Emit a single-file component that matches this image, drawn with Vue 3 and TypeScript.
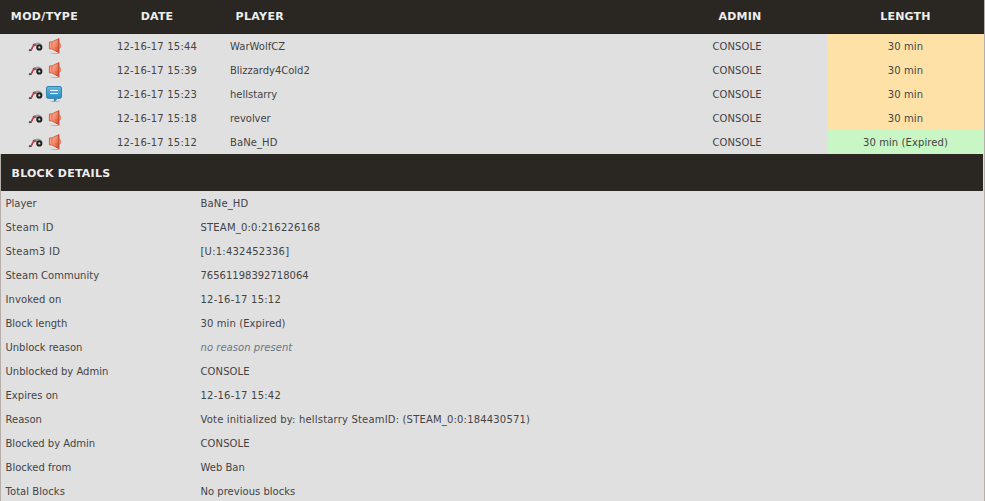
<script setup lang="ts">
interface Block {
  type: 'voice' | 'chat'
  date: string
  player: string
  admin: string
  length: string
  expired?: boolean
  nameTracking: number
}

interface Detail {
  label: string
  value: string
  labelTracking: number
  valueTracking: number
  empty?: boolean
}

const blocks: Block[] = [
  { type: 'voice', date: '12-16-17 15:44', player: 'WarWolfCZ', admin: 'CONSOLE', length: '30 min', nameTracking: 0 },
  { type: 'voice', date: '12-16-17 15:39', player: 'Blizzardy4Cold2', admin: 'CONSOLE', length: '30 min', nameTracking: -0.03 },
  { type: 'chat', date: '12-16-17 15:23', player: 'hellstarry', admin: 'CONSOLE', length: '30 min', nameTracking: 0 },
  { type: 'voice', date: '12-16-17 15:18', player: 'revolver', admin: 'CONSOLE', length: '30 min', nameTracking: -0.05 },
  { type: 'voice', date: '12-16-17 15:12', player: 'BaNe_HD', admin: 'CONSOLE', length: '30 min (Expired)', expired: true, nameTracking: 0.1 },
]

const details: Detail[] = [
  { label: 'Player', value: 'BaNe_HD', labelTracking: 0, valueTracking: 0.15 },
  { label: 'Steam ID', value: 'STEAM_0:0:216226168', labelTracking: 0.25, valueTracking: 0.2 },
  { label: 'Steam3 ID', value: '[U:1:432452336]', labelTracking: 0.25, valueTracking: 0.22 },
  { label: 'Steam Community', value: '76561198392718064', labelTracking: 0.02, valueTracking: 0 },
  { label: 'Invoked on', value: '12-16-17 15:12', labelTracking: 0.1, valueTracking: 0.22 },
  { label: 'Block length', value: '30 min (Expired)', labelTracking: -0.03, valueTracking: 0.1 },
  { label: 'Unblock reason', value: 'no reason present', labelTracking: -0.02, valueTracking: 0.04, empty: true },
  { label: 'Unblocked by Admin', value: 'CONSOLE', labelTracking: 0, valueTracking: 0.1 },
  { label: 'Expires on', value: '12-16-17 15:42', labelTracking: 0.05, valueTracking: 0.22 },
  { label: 'Reason', value: 'Vote initialized by: hellstarry SteamID: (STEAM_0:0:184430571)', labelTracking: 0, valueTracking: 0.18 },
  { label: 'Blocked by Admin', value: 'CONSOLE', labelTracking: 0, valueTracking: 0.1 },
  { label: 'Blocked from', value: 'Web Ban', labelTracking: 0.02, valueTracking: 0 },
  { label: 'Total Blocks', value: 'No previous blocks', labelTracking: 0.05, valueTracking: 0.02 },
]
</script>

<template>
  <main class="panel">
    <svg class="defs" width="0" height="0" aria-hidden="true">
      <defs>
        <linearGradient id="red" x1="0" y1="0" x2="1" y2="0.7">
          <stop offset="0" stop-color="#f3a088" />
          <stop offset="0.5" stop-color="#f39a7c" />
          <stop offset="1" stop-color="#e4502e" />
        </linearGradient>
        <linearGradient id="blue" x1="0" y1="0" x2="0" y2="1">
          <stop offset="0" stop-color="#65b8e0" />
          <stop offset="1" stop-color="#1c82bd" />
        </linearGradient>
      </defs>
    </svg>
    <div class="row head">
      <span class="type">MOD/TYPE</span>
      <span class="date">DATE</span>
      <span class="player">PLAYER</span>
      <span class="admin">ADMIN</span>
      <span class="length">LENGTH</span>
    </div>
    <div v-for="b in blocks" :key="b.date" class="row">
      <span class="type">
        <svg class="icon" viewBox="0 0 16 16">
          <path d="M2 11.8h2.2L6.4 7.6l3.2-.8" fill="none" stroke="#c23f4a" stroke-width="1.7" />
          <path d="M1.8 12.6h2.4M6 6.4l3.5-.6" stroke="#4c3d40" stroke-width="1" fill="none" />
          <path d="M8.4 5.9l3-.6 3 1.6" stroke="#9a9a9a" stroke-width="1.6" fill="none" />
          <circle cx="12.3" cy="9.4" r="2.1" fill="#d5d5d5" stroke="#222" stroke-width="2" />
        </svg>
        <svg v-if="b.type === 'voice'" class="icon" viewBox="0 0 16 16">
          <ellipse cx="8.5" cy="15.4" rx="5" ry=".5" fill="#a9a09d" opacity=".7" />
          <path d="M12 5.2c2.4.3 2.4 4.9 0 5.2" fill="#f3a283" stroke="#dc704f" stroke-width=".9" />
          <path d="M2.4 3.9h2.7L11.9.5v14.4l-6.8-4H2.4z" fill="url(#red)" stroke="#d55b3d" stroke-width=".9" />
          <path d="M5 4.3v6.4" stroke="#d96042" stroke-width=".7" />
          <path d="M11.7 1.2v13.2" stroke="#b9492f" stroke-width=".9" />
        </svg>
        <svg v-else class="icon chat" viewBox="0 0 16 16">
          <ellipse cx="9" cy="15.4" rx="5" ry=".5" fill="#999" opacity=".7" />
          <path d="M2 .5h12q1.5 0 1.5 1.5v8.6q0 1.7-1.5 1.7h-2.6l-3 3v-3H2q-1.5 0-1.5-1.7V2Q.5.5 2 .5z" fill="url(#blue)" stroke="#287ca9" stroke-width=".9" />
          <path d="M4 4.5h8M4 7.5h8" stroke="#eefaff" stroke-width="1.1" />
        </svg>
      </span>
      <span class="date">{{ b.date }}</span>
      <span class="player" :style="{ letterSpacing: b.nameTracking + 'px' }">{{ b.player }}</span>
      <span class="admin">{{ b.admin }}</span>
      <span class="length" :class="{ expired: b.expired }">{{ b.length }}</span>
    </div>
    <section class="details">
      <h2>BLOCK DETAILS</h2>
      <dl>
        <div v-for="d in details" :key="d.label" class="detail">
          <dt><span :style="{ letterSpacing: d.labelTracking + 'px' }">{{ d.label }}</span></dt>
          <dd :class="{ empty: d.empty }"><span :style="{ letterSpacing: d.valueTracking + 'px' }">{{ d.value }}</span></dd>
        </div>
      </dl>
    </section>
  </main>
</template>

<style>
body { overflow: hidden; background: #e0e0e0; }
</style>

<style scoped>
.panel {
  box-sizing: border-box;
  width: 985px;
  height: 501px;
  overflow: hidden;
  border-right: 1px solid #b5aeab;
  background: #e0e0e0;
  color: #444;
  font: 10px/26px Verdana, "DejaVu Sans", sans-serif;
}
.defs { display: block; height: 0; }
.row {
  display: grid;
  grid-template-columns: 89px 136px 422px 180px 157px;
  height: 24px;
}
.row > span { height: 24px; }
.type { display: flex; justify-content: center; align-items: center; gap: 4px; }
.icon { width: 16px; height: 16px; }
.chat { margin: 0 1px 0 -1px; }
.date { text-align: center; letter-spacing: 0.2px; }
.player { padding-left: 5px; }
.admin { text-align: center; letter-spacing: 0.1px; }
.length { text-align: center; background: #fde1a7; letter-spacing: 0.1px; }
.length.expired { background: #c8f7c5; }
.head {
  height: 34px;
  line-height: 33px;
  background: #2a2723;
  box-shadow: inset 0 -1px #2b1d20;
  color: #eee;
  font-size: 11px;
  font-weight: bold;
}
.head > span { height: 33px; background: none; letter-spacing: 0.2px; }
.head .type { display: block; text-align: center; letter-spacing: 0.35px; }
.head .player { padding-left: 10.5px; letter-spacing: 0.35px; }
.head .admin { padding-left: 6px; }
.details { border-left: 1px solid #b5aeab; }
h2 {
  margin: 0 1px 0 0;
  padding-left: 10.5px;
  height: 37px;
  line-height: 39px;
  background: #2a2723;
  color: #eee;
  font-size: 11px;
  letter-spacing: 0.25px;
}
dl { margin: 0; }
.detail { display: grid; grid-template-columns: 195px 1fr; height: 24px; padding-left: 4.5px; }
dt, dd { margin: 0; white-space: nowrap; }
.empty { color: #687780; font-style: italic; }
</style>
